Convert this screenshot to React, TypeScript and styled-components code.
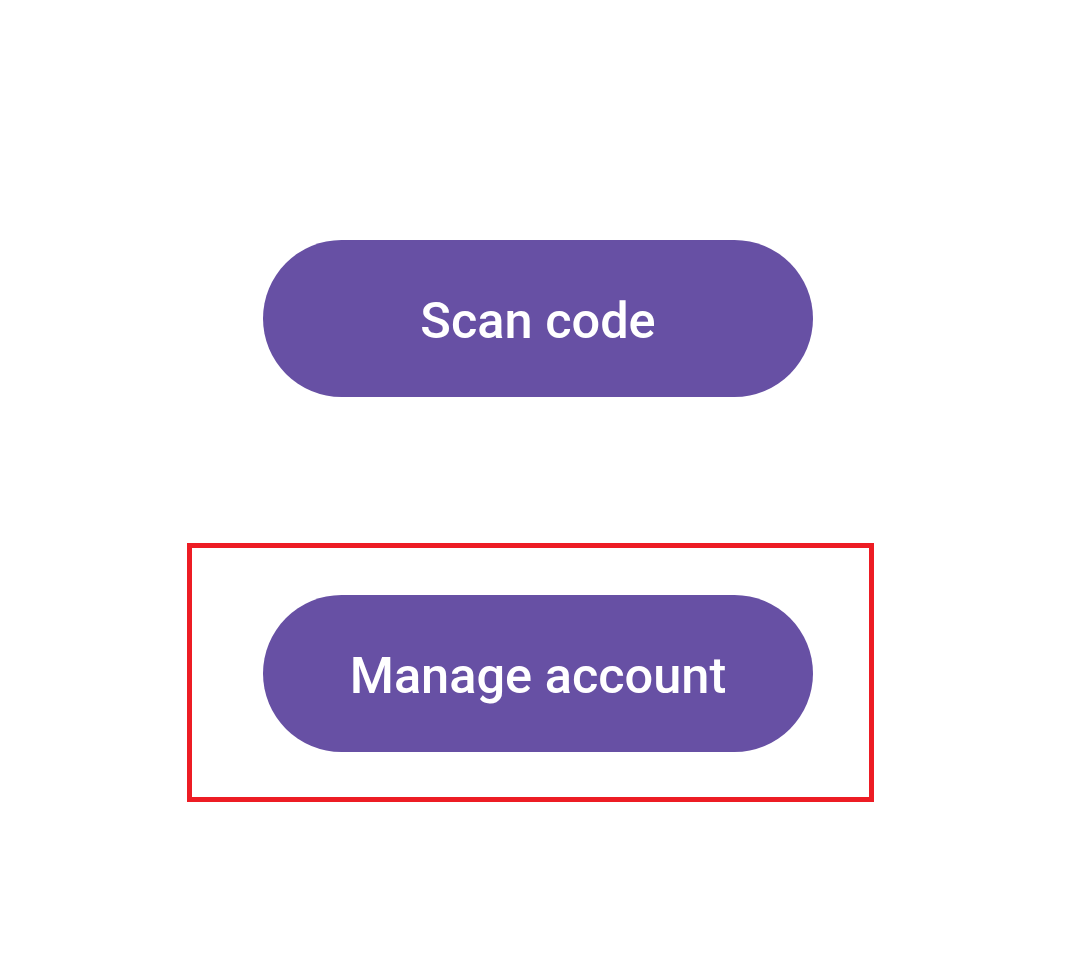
import React from "react";
import styled, { createGlobalStyle } from "styled-components";

const Global = createGlobalStyle`
  html, body { margin: 0; padding: 0; background: #ffffff; }
  body { font-family: Roboto, "Noto Sans", sans-serif; }
`;

const Page = styled.div`
  width: 1080px;
  height: 960px;
  display: flex;
  flex-direction: column;
  padding-top: 240px;
  box-sizing: border-box;
`;

const Row = styled.div`
  display: flex;
  padding-left: 263px;
`;

const Highlight = styled.div`
  margin-top: 146px;
  margin-left: 187px;
  width: 687px;
  height: 259px;
  box-sizing: border-box;
  border: 5px solid #ed1c24;
  padding: 47px 56px 0 71px;
  display: flex;
`;

const PillButton = styled.button`
  width: 550px;
  height: 157px;
  border: none;
  border-radius: 80px;
  background: #6750a4;
  color: #ffffff;
  font-family: Roboto, "Noto Sans", sans-serif;
  font-weight: 500;
  font-size: 50.5px;
  display: flex;
  align-items: center;
  justify-content: center;
  padding: 4px 0 0 0;
  cursor: pointer;
`;

export default function App() {
  return (
    <>
      <Global />
      <Page>
        <Row>
          <PillButton>Scan code</PillButton>
        </Row>
        <Highlight>
          <PillButton>Manage account</PillButton>
        </Highlight>
      </Page>
    </>
  );
}
